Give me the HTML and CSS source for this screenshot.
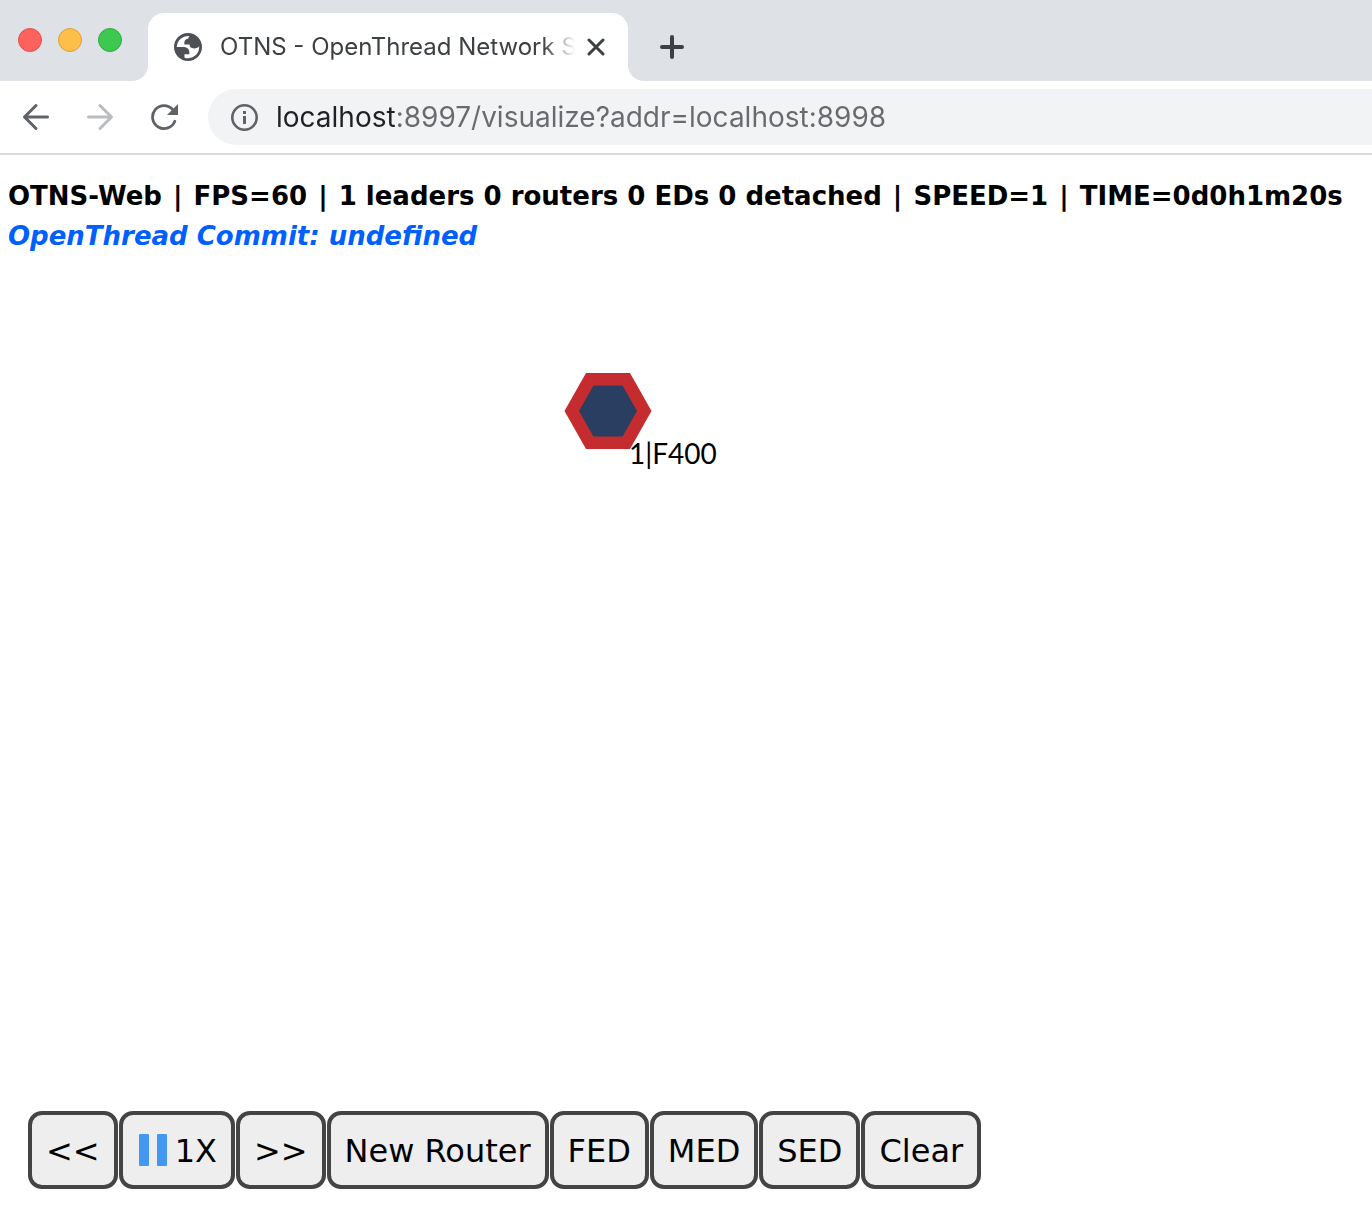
FILE: index.html
```html
<!DOCTYPE html>
<html lang="en">
<head>
<meta charset="utf-8">
<meta name="viewport" content="width=device-width, initial-scale=1">
<title>OTNS - OpenThread Network Simulator</title>
<link rel="stylesheet" href="styles.css">
</head>
<body>
<header class="browser">
  <div class="tab-strip">
    <div class="window-controls">
      <button class="light light-close" type="button" aria-label="Close window"></button>
      <button class="light light-minimize" type="button" aria-label="Minimize window"></button>
      <button class="light light-zoom" type="button" aria-label="Zoom window"></button>
    </div>
    <div class="tab-slot">
      <div class="tab">
        <svg class="favicon" viewBox="2 2 20 20" aria-hidden="true">
          <path fill="#4d5156" fill-rule="evenodd" d="M12 2C6.477 2 2 6.477 2 12s4.477 10 10 10 10-4.477 10-10S17.523 2 12 2zM4 12h4.400c3.407.022 4.922 1.730 4.543 5.127H9.488v2.470a8.004 8.004 0 0 0 10.498-8.083C19.327 12.504 18.113 13 16.344 13c-2.137 0-3.206-.916-3.206-2.750h-3.748c-.274-2.728.683-4.092 2.870-4.092 0-.975.327-1.597.811-1.970A8.004 8.004 0 0 0 4 12z"/>
        </svg>
        <span class="tab-title">OTNS - OpenThread Network Simulator</span>
        <button class="icon-button tab-close" type="button" aria-label="Close tab">
          <svg width="18" height="18" viewBox="0 0 18 18"><path d="M2 2L16 16M16 2L2 16" stroke="#3c4043" stroke-width="3" stroke-linecap="round"/></svg>
        </button>
      </div>
    </div>
    <div class="strip-rest">
      <button class="icon-button" type="button" aria-label="New tab">
        <svg width="24" height="24" viewBox="0 0 24 24"><path d="M12 2V22M2 12H22" stroke="#3c4043" stroke-width="4" stroke-linecap="round"/></svg>
      </button>
    </div>
  </div>
  <div class="toolbar">
    <nav class="nav-buttons" aria-label="History">
      <button class="icon-button" type="button" aria-label="Back">
        <svg width="28" height="28" viewBox="0 0 28 28"><path d="M25.500 14H3M14 2.500L2.500 14L14 25.500" fill="none" stroke="#5f6368" stroke-width="3" stroke-linecap="round" stroke-linejoin="round"/></svg>
      </button>
      <button class="icon-button" type="button" aria-label="Forward">
        <svg width="28" height="28" viewBox="0 0 28 28"><path d="M2.500 14H25M14 2.500L25.500 14L14 25.500" fill="none" stroke="#babcbe" stroke-width="3" stroke-linecap="round" stroke-linejoin="round"/></svg>
      </button>
      <button class="icon-button" type="button" aria-label="Reload">
        <svg width="28" height="28" viewBox="0 0 28 28"><path d="M24.800 18.200A11.500 11.500 0 1 1 22.800 6.600" fill="none" stroke="#5f6368" stroke-width="2.800" stroke-linecap="round"/><path d="M28 1V12H17Z" fill="#5f6368"/></svg>
      </button>
    </nav>
    <div class="address-bar">
      <svg class="info" width="28" height="28" viewBox="0 0 28 28" aria-hidden="true"><circle cx="13.500" cy="14.500" r="12.200" fill="none" stroke="#5f6368" stroke-width="2.600"/><path d="M12 8H15V11H12ZM12 13H15V21H12Z" fill="#5f6368"/></svg>
      <input class="address" type="text" aria-label="Address" value="localhost:8997/visualize?addr=localhost:8998">
    </div>
  </div>
</header>
<main class="simulator">
  <div class="status">
    <p class="status-line">OTNS-Web <span class="separator">|</span> FPS=60 <span class="separator">|</span> 1 leaders 0 routers 0 EDs 0 detached <span class="separator">|</span> SPEED=1 <span class="separator">|</span> TIME=0d0h1m20s</p>
    <a class="commit" href="#commit">OpenThread Commit: undefined</a>
  </div>
  <section class="field" aria-label="Network">
    <div class="node">
      <svg class="node-shape" width="88" height="78" viewBox="0 0 88 78" aria-hidden="true"><path d="M22 1H66L87.500 39L66 77H22L0.500 39Z" fill="#c42c30"/><path d="M29.500 13.500H58.500L73 39L58.500 64.500H29.500L15 39Z" fill="#293e60"/></svg>
      <span class="node-label">1|F400</span>
    </div>
  </section>
  <div class="actions">
    <button class="action" type="button">&lt;&lt;</button>
    <button class="action" type="button"><svg class="pause" width="32" height="32" viewBox="0 0 32 32" aria-hidden="true"><rect x="2" width="10" height="32" rx="1" fill="#4298f0"/><rect x="20" width="10" height="32" rx="1" fill="#4298f0"/></svg>1X</button>
    <button class="action" type="button">&gt;&gt;</button>
    <button class="action" type="button">New Router</button>
    <button class="action" type="button">FED</button>
    <button class="action" type="button">MED</button>
    <button class="action" type="button">SED</button>
    <button class="action" type="button">Clear</button>
  </div>
</main>
</body>
</html>
```
FILE: styles.css
```css
* {
  box-sizing: border-box;
}

body {
  margin: 0;
  min-height: 100vh;
  display: flex;
  flex-direction: column;
  background: #fff;
  color: #000;
  font-family: "DejaVu Sans", Verdana, sans-serif;
}

button {
  padding: 0;
  border: 0;
  background: none;
  color: inherit;
  font: inherit;
}

svg {
  display: block;
  flex: none;
}

/* Browser window */
.browser {
  border-bottom: 2px solid #d9dade;
  font-family: Inter, sans-serif;
}

.tab-strip {
  display: flex;
  height: 81px;
}

.window-controls {
  display: flex;
  align-items: center;
  gap: 16px;
  padding: 0 26px 2px 18px;
  background: #dee1e6;
  border-bottom-right-radius: 16px;
}

.light {
  width: 24px;
  height: 24px;
  border: 1px solid;
  border-radius: 50%;
}

.light-close {
  background: #fe625c;
  border-color: #df4f4b;
}

.light-minimize {
  background: #febe4a;
  border-color: #dea03c;
}

.light-zoom {
  background: #3dc951;
  border-color: #2fac3c;
}

.tab-slot {
  flex: 0 1 480px;
  min-width: 0;
  padding-top: 13px;
  background: #dee1e6;
}

.tab {
  display: flex;
  align-items: center;
  height: 100%;
  padding: 0 23px 0 26px;
  background: #fff;
  border-radius: 16px 16px 0 0;
}

.favicon {
  width: 28px;
  height: 28px;
}

.tab-title {
  flex: 1;
  min-width: 0;
  margin: 0 12px 0 18px;
  overflow: hidden;
  white-space: nowrap;
  font-size: 24px;
  line-height: 32px;
  color: #3c4043;
  mask-image: linear-gradient(to left, transparent, #000 32px);
}

.strip-rest {
  flex: 1;
  display: flex;
  align-items: center;
  padding: 13px 32px 0;
  background: #dee1e6;
  border-bottom-left-radius: 16px;
}

.toolbar {
  display: flex;
  align-items: center;
  height: 72px;
}

.nav-buttons {
  display: flex;
  gap: 36px;
  padding: 0 30px 0 22px;
}

.address-bar {
  flex: 1;
  display: flex;
  align-items: center;
  gap: 17px;
  height: 56px;
  padding-left: 23px;
  background: #f1f3f4;
  border-radius: 28px 0 0 28px;
}

/* The host is drawn dark and the rest of the address grey */
.address {
  flex: 1;
  min-width: 0;
  padding: 0;
  border: 0;
  outline: 0;
  background: linear-gradient(to right, #202124 120px, #686a6d 120px);
  background-clip: text;
  color: transparent;
  font: 28px/40px Inter, sans-serif;
}

/* Simulator page */
.simulator {
  flex: 1;
  display: flex;
  flex-direction: column;
}

.status {
  padding: 21px 8px 0;
  font-size: 26px;
  font-weight: bold;
  line-height: 40px;
}

.status-line {
  margin: 0;
}

.separator {
  margin: 0 2px;
}

.commit {
  color: #0060ff;
  font-style: italic;
  text-decoration: none;
}

.field {
  flex: 1;
  position: relative;
  min-height: 300px;
}

.node {
  position: absolute;
  left: 564px;
  top: 116px;
}

.node-label {
  position: absolute;
  left: 65px;
  top: 63px;
  font: 28px/36px Lato, sans-serif;
}

.actions {
  display: flex;
  flex-wrap: wrap;
  gap: 1px;
  padding: 0 28px 34px;
}

.action {
  display: flex;
  align-items: center;
  gap: 6px;
  height: 78px;
  padding: 2px 14px 0;
  border: 4px solid #444;
  border-radius: 14px;
  background: #eee;
  font-size: 32px;
}

.pause {
  margin-bottom: 2px;
}
```
